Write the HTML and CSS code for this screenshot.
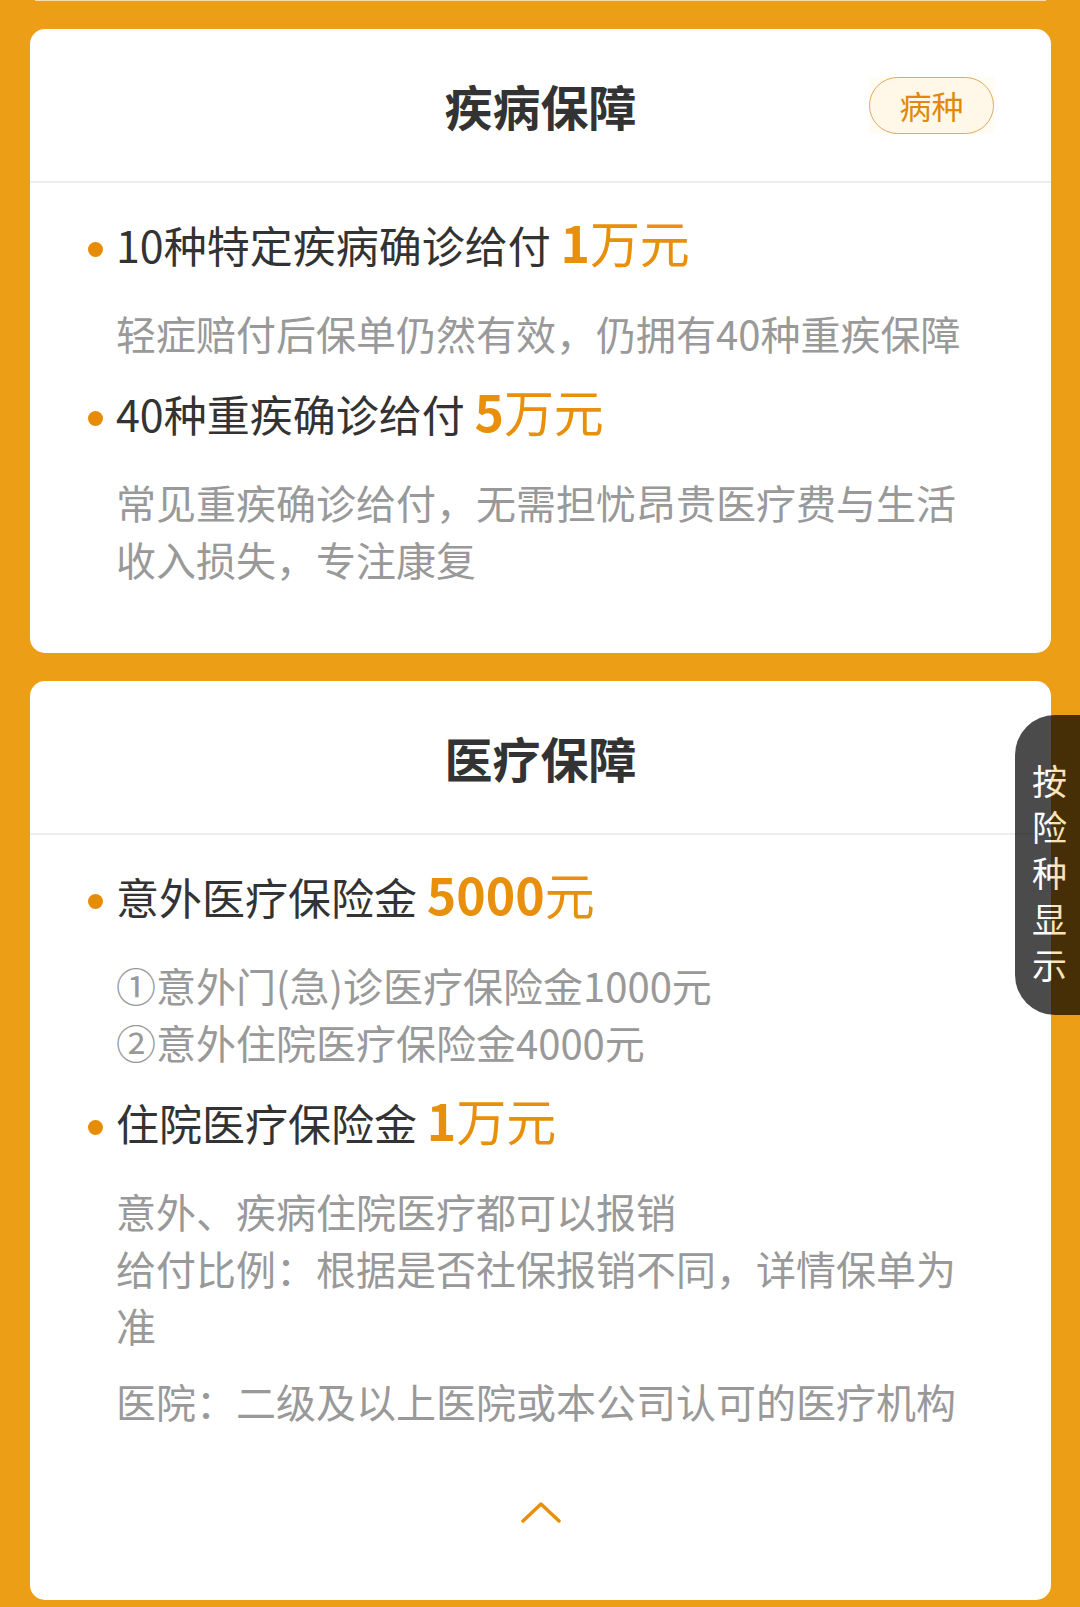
FILE: index.html
```html
<!DOCTYPE html>
<html lang="zh-CN">
<head>
<meta charset="utf-8">
<title>保障详情</title>
<link rel="stylesheet" href="styles.css">
</head>
<body>
<div class="page">
  <div class="prev-card"></div>

  <section class="card card-first">
    <header class="card-head">
      <span class="head-side"></span>
      <h2 class="card-title">疾病保障</h2>
      <span class="head-side head-right"><span class="badge-wrap"><span class="badge">病种</span></span></span>
    </header>
    <div class="card-body">
      <div class="item">
        <div class="item-main"><span class="dot"></span><span class="item-text">10种特定疾病确诊给付 <span class="amount"><b>1</b>万元</span></span></div>
        <p class="desc">轻症赔付后保单仍然有效，仍拥有40种重疾保障</p>
      </div>
      <div class="item">
        <div class="item-main"><span class="dot"></span><span class="item-text">40种重疾确诊给付 <span class="amount"><b>5</b>万元</span></span></div>
        <p class="desc">常见重疾确诊给付，无需担忧昂贵医疗费与生活收入损失，专注康复</p>
      </div>
    </div>
  </section>

  <section class="card card-second">
    <header class="card-head">
      <span class="head-side"></span>
      <h2 class="card-title">医疗保障</h2>
      <span class="head-side"></span>
    </header>
    <div class="card-body">
      <div class="item">
        <div class="item-main"><span class="dot"></span><span class="item-text">意外医疗保险金 <span class="amount"><b>5000</b>元</span></span></div>
        <p class="desc">①意外门(急)诊医疗保险金1000元<br>②意外住院医疗保险金4000元</p>
      </div>
      <div class="item">
        <div class="item-main"><span class="dot"></span><span class="item-text">住院医疗保险金 <span class="amount"><b>1</b>万元</span></span></div>
        <p class="desc">意外、疾病住院医疗都可以报销<br>给付比例：根据是否社保报销不同，详情保单为准</p>
        <p class="desc desc-gap">医院：二级及以上医院或本公司认可的医疗机构</p>
      </div>
      <div class="collapse">
        <svg class="chevron" width="40" height="22" viewBox="0 0 40 22" aria-hidden="true">
          <polyline points="2,20 20,3 38,20" fill="none" stroke="#e8900c" stroke-width="3.5" stroke-linecap="round" stroke-linejoin="round"/>
        </svg>
      </div>
    </div>
  </section>

  <div class="side-tab"><span class="side-text">按险种显示</span></div>
</div>
</body>
</html>
```

FILE: styles.css
```css
* { box-sizing: border-box; }
html, body { margin: 0; padding: 0; }
body {
  background: #ed9e17;
  font-family: "Noto Sans CJK SC", "Noto Sans", sans-serif;
  color: #333;
}
.page {
  position: relative;
  padding: 0 29px 7px 30px;
  min-height: 1607px;
}
.prev-card {
  height: 1px;
  margin: 0 5px;
  background: #f6dcaa;
}
.card {
  background: #fff;
  border-radius: 15px;
}
.card-first { margin-top: 28px; }
.card-second { margin-top: 28px; }
.card-head {
  height: 154px;
  border-bottom: 2px solid #eeeeee;
  display: grid;
  grid-template-columns: 1fr auto 1fr;
  align-items: center;
  padding: 0 57px;
}
.card-title {
  margin: 0;
  font-size: 48px;
  font-weight: 700;
  color: #333;
  line-height: 60px;
}
.head-right {
  justify-self: end;
  display: flex;
}
.badge-wrap {
  background: #fffcf4;
  padding: 0;
}
.badge {
  display: flex;
  align-items: center;
  justify-content: center;
  width: 125px;
  height: 57px;
  border: 1.5px solid #e2aa5e;
  border-radius: 29px;
  background: #fff8e8;
  color: #e0890a;
  font-size: 32px;
  line-height: 1;
}
.card-body {
  padding: 34px 60px 65px 60px;
}
.item + .item { margin-top: 24px; }
.item-main {
  display: flex;
  align-items: center;
  height: 64px;
}
.dot {
  width: 15px;
  height: 15px;
  border-radius: 50%;
  background: #e78c06;
  flex: none;
  margin: 0 13px 0 -2px;
}
.item-text {
  font-size: 43px;
  line-height: 64px;
  color: #333;
  white-space: nowrap;
  margin-top: -10px;
}
.amount {
  font-size: 50px;
  line-height: 1;
  color: #e8900c;
}
.amount b { font-weight: 700; }
.desc {
  margin: 24px 0 0 26px;
  font-size: 40px;
  line-height: 57px;
  color: #999;
  width: 870px;
}
.desc-gap { margin-top: 19px; }
.card-second .card-body { padding-bottom: 77px; }
.collapse {
  display: flex;
  justify-content: center;
  margin-top: 71px;
  height: 22px;
}
.chevron { display: block; }
.side-tab {
  position: absolute;
  top: 715px;
  right: 0;
  width: 65px;
  padding: 42px 0 28px 4px;
  background: #000;
  opacity: 0.7;
  border-radius: 40px 0 0 40px;
  display: flex;
  justify-content: center;
}
.side-text {
  width: 35px;
  font-size: 35px;
  line-height: 46px;
  color: #fff;
  text-align: center;
  word-break: break-all;
}
```
